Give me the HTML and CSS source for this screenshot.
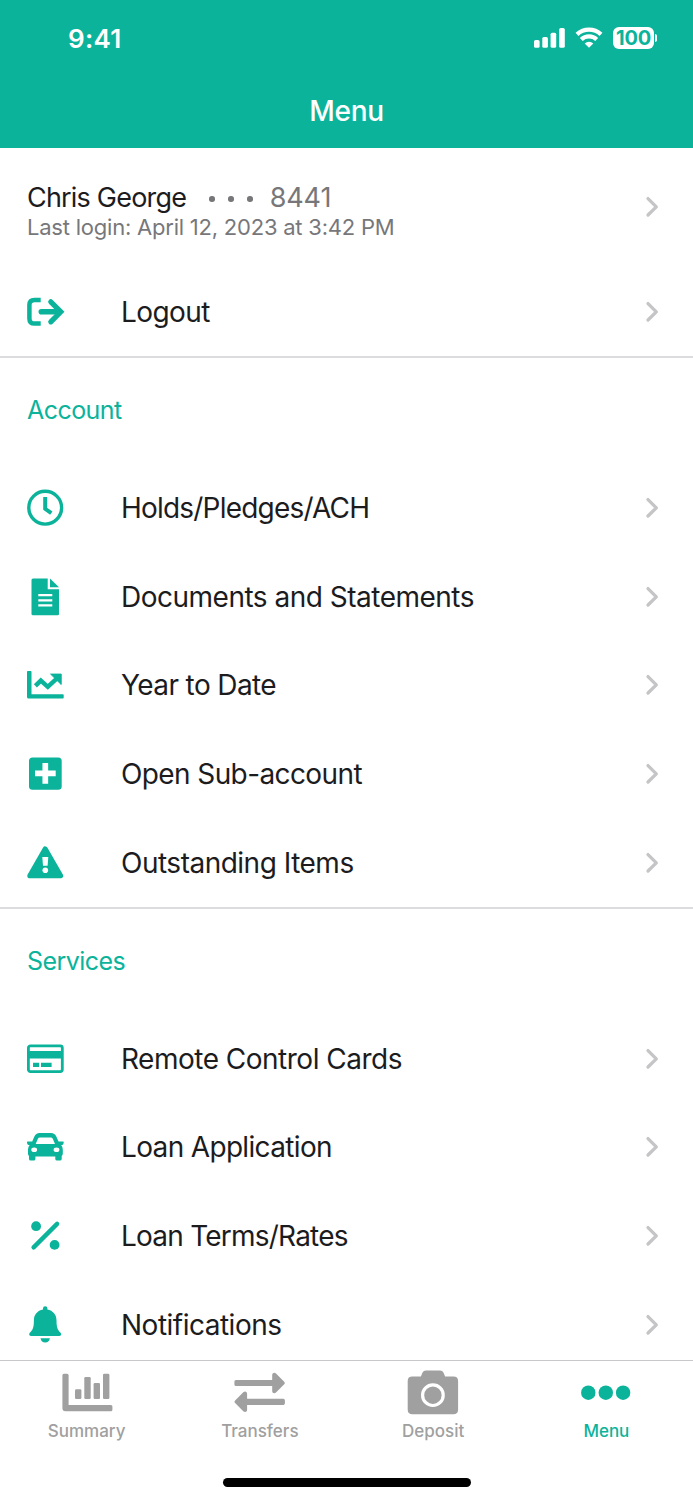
FILE: index.html
```
<!DOCTYPE html>
<html lang="en">

<head>
    <meta charset="UTF-8">
    <meta name="viewport" content="width=device-width, initial-scale=1.0">
    <title>Menu</title>
    <link rel="stylesheet" href="styles.css">
</head>

<body>
    <!-- Shared chevron -->
    <svg class="defs" width="0" height="0">
        <symbol id="chevron" viewBox="0 0 16 24">
            <path d="M4 3.6 L12.3 11.8 L4 20" fill="none" stroke="#c5c5c7" stroke-width="3.3" stroke-linecap="round" stroke-linejoin="round"/>
        </symbol>
    </svg>

    <div class="app">
        <header class="header">
            <div class="status-bar">
                <span class="time">9:41</span>
                <div class="status-icons">
                    <svg width="32" height="22" viewBox="0 0 32 22" fill="#fff">
                        <rect x="0" y="13" width="5.6" height="7.8" rx="1.6"/>
                        <rect x="8.3" y="10" width="5.6" height="10.8" rx="1.6"/>
                        <rect x="16.6" y="5.7" width="5.6" height="15.1" rx="1.6"/>
                        <rect x="25.2" y="1" width="5.6" height="19.8" rx="1.6"/>
                    </svg>
                    <svg class="wifi" width="28" height="22" viewBox="0 0 28 22" fill="none" stroke="#fff" stroke-width="4.2">
                        <path d="M2 7.4 A17.6 17.6 0 0 1 26 7.4"/>
                        <path d="M6.3 12.5 A11.2 11.2 0 0 1 21.7 12.5"/>
                        <path d="M14 20.8 L9.7 16.6 A6.2 6.2 0 0 1 18.3 16.6 Z" fill="#fff" stroke="none"/>
                    </svg>
                    <div class="battery">100</div>
                    <div class="battery-tip"></div>
                </div>
            </div>
            <h1 class="title">Menu</h1>
        </header>

        <main class="content">
            <section class="section">
                <div class="profile">
                    <div class="profile-info">
                        <div class="profile-name">
                            <span class="name">Chris George</span>
                            <span class="mask"><i></i><i></i><i></i></span>
                            <span class="number">8441</span>
                        </div>
                        <p class="last-login">Last login: April 12, 2023 at 3:42 PM</p>
                    </div>
                    <svg class="chevron"><use href="#chevron"/></svg>
                </div>
                <div class="row">
                    <svg class="icon" viewBox="0 0 40 40" fill="none" stroke="#0bb39b">
                        <path d="M15.7 7.9 H9.5 Q4.4 7.9 4.4 13 V26.4 Q4.4 31.5 9.5 31.5 H15.7" stroke-width="4.5"/>
                        <path d="M16.3 19.8 H33" stroke-width="5.6" stroke-linecap="round"/>
                        <path d="M25.8 9.8 L35.8 19.8 L25.8 29.8" stroke-width="5.2" stroke-linecap="round"/>
                    </svg>
                    <span class="label logout">Logout</span>
                    <svg class="chevron"><use href="#chevron"/></svg>
                </div>
            </section>

            <section class="section">
                <h2 class="section-title">Account</h2>
                <div class="row">
                    <svg class="icon" viewBox="0 0 40 40" fill="none" stroke="#0bb39b">
                        <circle cx="20.2" cy="19.7" r="16.4" stroke-width="3.4"/>
                        <path d="M20.2 9 V20.8 L26.3 25.2" stroke-width="4"/>
                    </svg>
                    <span class="label holds">Holds/Pledges/ACH</span>
                    <svg class="chevron"><use href="#chevron"/></svg>
                </div>
                <div class="row">
                    <svg class="icon" viewBox="0 0 40 40" fill="#0bb39b">
                        <path d="M8 1.5 H22.7 V12.3 H34 V37 Q34 38.3 32.7 38.3 H8 Q6.5 38.3 6.5 37 V3 Q6.5 1.5 8 1.5 Z"/>
                        <path d="M25 1.5 L34 10.2 H25 Z"/>
                        <path d="M13.3 18.2 H27.3 M13.3 23.3 H27.3 M13.3 28.3 H27.3" stroke="#fff" stroke-width="2.2"/>
                    </svg>
                    <span class="label documents">Documents and Statements</span>
                    <svg class="chevron"><use href="#chevron"/></svg>
                </div>
                <div class="row">
                    <svg class="icon" viewBox="0 0 40 40" fill="none" stroke="#0bb39b">
                        <path d="M2 6.8 Q2 6 2.8 6 H5.7 Q6.5 6 6.5 6.8 V29.3 H37.9 Q38.7 29.3 38.7 30.1 V32.8 Q38.7 33.6 37.9 33.6 H3.5 Q2 33.6 2 32 Z" fill="#0bb39b" stroke="none"/>
                        <path d="M10.4 20.8 L15.8 15.6 L22.8 21.8 L32.5 12.8" stroke-width="4.4"/>
                        <path d="M25.6 9.1 H36.2 V19.5 Z" fill="#0bb39b" stroke-linejoin="round"/>
                    </svg>
                    <span class="label year">Year to Date</span>
                    <svg class="chevron"><use href="#chevron"/></svg>
                </div>
                <div class="row">
                    <svg class="icon" viewBox="0 0 40 40" fill="#0bb39b">
                        <rect x="4" y="3.5" width="32.7" height="32.3" rx="3.5"/>
                        <path d="M10 19.4 H30.7 M20.3 9.1 V29.7" stroke="#fff" stroke-width="5.7"/>
                    </svg>
                    <span class="label sub-account">Open Sub-account</span>
                    <svg class="chevron"><use href="#chevron"/></svg>
                </div>
                <div class="row">
                    <svg class="icon" viewBox="0 0 40 40" fill="#0bb39b">
                        <path d="M20.2 6 L35.6 32.7 H4.9 Z" stroke="#0bb39b" stroke-width="5.2" stroke-linejoin="round"/>
                        <path d="M17.3 14 H23.3 L22.6 22.7 H18 Z" fill="#fff"/>
                        <circle cx="20.3" cy="27.2" r="2.8" fill="#fff"/>
                    </svg>
                    <span class="label outstanding">Outstanding Items</span>
                    <svg class="chevron"><use href="#chevron"/></svg>
                </div>
            </section>

            <section class="section">
                <h2 class="section-title">Services</h2>
                <div class="row">
                    <svg class="icon" viewBox="0 0 40 40" fill="#0bb39b">
                        <rect x="3.4" y="6.8" width="33.9" height="25.8" rx="2" fill="none" stroke="#0bb39b" stroke-width="2.8"/>
                        <path d="M3 11.9 H38 V19.5 H3 Z M8 23.7 H14.2 V28 H8 Z M16 23.7 H26.6 V28 H16 Z"/>
                    </svg>
                    <span class="label remote">Remote Control Cards</span>
                    <svg class="chevron"><use href="#chevron"/></svg>
                </div>
                <div class="row">
                    <svg class="icon" viewBox="0 0 40 40" fill="#0bb39b">
                        <path fill-rule="evenodd" d="M14.5 6 H26 Q29.8 6 31.3 9.5 L33.5 14.6 H38 Q39 14.6 38.7 15.7 L38.3 17 Q38 18 37 18 H36.2 Q37.8 20 37.8 22.5 V26.5 Q37.8 28 36.7 29 V32 Q36.7 33.6 35 33.6 H32 Q30.3 33.6 30.3 32 V29.5 H10.4 V32 Q10.4 33.6 8.7 33.6 H5.7 Q4 33.6 4 32 V29 Q3 28 3 26.5 V22.5 Q3 20 4.6 18 H3.7 Q2.7 18 2.4 17 L2 15.7 Q1.7 14.6 2.7 14.6 H7.2 L9.4 9.5 Q10.9 6 14.5 6 Z M15 10.4 Q13.5 10.4 12.9 11.8 L10.7 17 H30 L27.8 11.8 Q27.2 10.4 25.7 10.4 Z"/>
                        <ellipse cx="9.2" cy="22.8" rx="2.9" ry="2.3" fill="#fff"/>
                        <ellipse cx="31.5" cy="22.8" rx="2.9" ry="2.3" fill="#fff"/>
                    </svg>
                    <span class="label loan-app">Loan Application</span>
                    <svg class="chevron"><use href="#chevron"/></svg>
                </div>
                <div class="row">
                    <svg class="icon" viewBox="0 0 40 40" fill="#0bb39b">
                        <circle cx="11.1" cy="10.2" r="4.9"/>
                        <circle cx="29.6" cy="28.9" r="4.9"/>
                        <path d="M32.1 7.9 L8.6 31.4" stroke="#0bb39b" stroke-width="4.4" stroke-linecap="round"/>
                    </svg>
                    <span class="label rates">Loan Terms/Rates</span>
                    <svg class="chevron"><use href="#chevron"/></svg>
                </div>
                <div class="row">
                    <svg class="icon" viewBox="0 0 40 40" fill="#0bb39b">
                        <path d="M20.2 1.2 Q22.4 1.2 22.4 3.3 V4.6 C28 5.7 31.5 9.6 31.5 15.5 C31.5 22 32.5 25 35.6 27.8 Q36.6 29 36 30 Q35.5 31 34.2 31 H6.2 Q4.9 31 4.3 30 Q3.8 29 4.8 27.8 C7.9 25 8.9 22 8.9 15.5 C8.9 9.6 12.4 5.7 18 4.6 V3.3 Q18 1.2 20.2 1.2 Z"/>
                        <path d="M15.5 33.2 H24.9 Q24 37.6 20.2 37.6 Q16.4 37.6 15.5 33.2 Z"/>
                    </svg>
                    <span class="label notifications">Notifications</span>
                    <svg class="chevron"><use href="#chevron"/></svg>
                </div>
            </section>
        </main>

        <nav class="tab-bar">
            <div class="tabs">
                <div class="tab">
                    <svg class="tab-icon" viewBox="0 0 60 50" fill="#a0a0a0">
                        <path d="M5.4 9.2 Q5.4 7.7 6.9 7.7 H10.1 Q11.6 7.7 11.6 9.2 V39 H53.9 Q55.4 39 55.4 40.5 V43.8 Q55.4 45.3 53.9 45.3 H8.4 Q5.4 45.3 5.4 42.3 Z"/>
                        <rect x="18" y="23.3" width="6.4" height="9.7" rx="1.3"/>
                        <rect x="27.3" y="11" width="6.4" height="22" rx="1.3"/>
                        <rect x="36.6" y="17" width="6.4" height="16" rx="1.3"/>
                        <rect x="46" y="7.7" width="6.4" height="25.3" rx="1.3"/>
                    </svg>
                    <span class="tab-label">Summary</span>
                </div>
                <div class="tab">
                    <svg class="tab-icon" viewBox="0 0 60 50" fill="#a0a0a0">
                        <path d="M6 14 H42.2 V9 C42.2 7 44.3 5.9 46 7.5 L54.2 15.7 Q55.4 17 54.2 18.3 L46 26.5 C44.3 28.1 42.2 27 42.2 25 V20.1 H6 Q4.4 20.1 4.4 18.5 V15.6 Q4.4 14 6 14 Z"/>
                        <path d="M53.3 32.8 H17.1 V27.8 C17.1 25.8 15 24.7 13.3 26.3 L5.1 34.5 Q3.9 35.8 5.1 37.1 L13.3 45.3 C15 46.9 17.1 45.8 17.1 43.8 V38.9 H53.3 Q54.9 38.9 54.9 37.3 V34.4 Q54.9 32.8 53.3 32.8 Z"/>
                    </svg>
                    <span class="tab-label">Transfers</span>
                </div>
                <div class="tab">
                    <svg class="tab-icon" viewBox="0 0 60 50" fill="#a0a0a0">
                        <path d="M9.4 10.6 H17.9 L19.1 7.5 Q20.2 4.6 23 4.6 H37 Q39.8 4.6 40.9 7.5 L42.1 10.6 H50.4 Q55.1 10.6 55.1 15 V43.5 Q55.1 48.2 50.4 48.2 H9.4 Q4.7 48.2 4.7 43.5 V15 Q4.7 10.6 9.4 10.6 Z"/>
                        <circle cx="29.9" cy="29.2" r="10.3" fill="none" stroke="#fff" stroke-width="3.2"/>
                    </svg>
                    <span class="tab-label">Deposit</span>
                </div>
                <div class="tab active">
                    <svg class="tab-icon" viewBox="0 0 60 50" fill="#0bb39b">
                        <circle cx="12.3" cy="26.7" r="7.2"/>
                        <circle cx="29.8" cy="26.7" r="7.2"/>
                        <circle cx="47.1" cy="26.7" r="7.2"/>
                    </svg>
                    <span class="tab-label">Menu</span>
                </div>
            </div>
            <div class="home-indicator"></div>
        </nav>
    </div>
</body>

</html>
```

FILE: styles.css
```
* {
    box-sizing: border-box;
}

body {
    margin: 0;
    background-color: #fff;
    font-family: Inter, "Liberation Sans", sans-serif;
    color: #1c1c1e;
}

.defs {
    display: block;
}

.app {
    display: flex;
    flex-direction: column;
    width: 693px;
    height: 1500px;
    overflow: hidden;
}

/* Header */
.header {
    height: 148px;
    flex-shrink: 0;
    background-color: #0bb39b;
    color: #fff;
}

.status-bar {
    display: flex;
    justify-content: space-between;
    align-items: center;
    height: 76px;
    padding: 0 36px 0 68px;
}

.time {
    font-size: 26px;
    font-weight: 600;
    letter-spacing: 0.3px;
}

.status-icons {
    display: flex;
    align-items: center;
}

.wifi {
    margin-left: 9px;
}

.battery {
    width: 41px;
    height: 22px;
    margin-left: 10px;
    border-radius: 6px;
    background-color: #fff;
    color: #0bb39b;
    font-size: 20px;
    font-weight: 700;
    letter-spacing: -0.2px;
    line-height: 22px;
    text-align: center;
}

.battery-tip {
    width: 2px;
    height: 8px;
    margin-left: 1px;
    border-radius: 0 3px 3px 0;
    background-color: #fff;
}

.title {
    margin: 0;
    font-size: 28px;
    font-weight: 500;
    letter-spacing: -0.3px;
    line-height: 70px;
    text-align: center;
}

/* Menu list */
.content {
    flex: 1;
    min-height: 0;
    overflow: hidden;
}

.section {
    border-bottom: 2px solid #dcdcde;
}

.profile {
    display: flex;
    justify-content: space-between;
    height: 119.5px;
    padding: 33px 33px 0 27px;
}

.profile .chevron {
    margin-top: 14px;
}

.profile-name {
    display: flex;
    align-items: center;
    height: 33px;
    font-size: 27px;
}

.name {
    letter-spacing: -0.8px;
}

.mask {
    display: flex;
    gap: 13.5px;
    margin: 3px 17px 0 23px;
}

.mask i {
    width: 5.5px;
    height: 5.5px;
    border-radius: 50%;
    background-color: #77777a;
}

.number {
    color: #77777a;
    letter-spacing: -0.1px;
}

.last-login {
    margin: 0;
    color: #77777a;
    font-size: 22px;
    letter-spacing: -0.22px;
    line-height: 26px;
}

.row {
    display: flex;
    align-items: center;
    height: 88.7px;
    padding: 0 33px 0 25px;
}

.icon {
    width: 40px;
    height: 40px;
    margin-right: 56px;
}

.label {
    font-size: 28px;
    letter-spacing: -0.5px;
    line-height: 36px;
    white-space: nowrap;
}

.logout,
.year,
.sub-account {
    letter-spacing: -0.6px;
}

.holds {
    letter-spacing: -0.8px;
}

.loan-app {
    letter-spacing: -0.66px;
}

.rates {
    letter-spacing: -0.78px;
}

.chevron {
    width: 16px;
    height: 24px;
    margin-left: auto;
}

.section-title {
    height: 105.3px;
    margin: 0;
    padding-left: 27px;
    color: #0bb39b;
    font-size: 25px;
    font-weight: 400;
    letter-spacing: -0.55px;
    line-height: 105px;
}

/* Bottom tabs */
.tab-bar {
    height: 140px;
    flex-shrink: 0;
    border-top: 1px solid #c8c8ca;
    background-color: #fff;
}

.tabs {
    display: flex;
    height: 117px;
    padding-top: 5px;
}

.tab {
    display: flex;
    flex: 1;
    flex-direction: column;
    align-items: center;
    color: #a0a0a0;
}

.tab.active {
    color: #0bb39b;
}

.tab-icon {
    width: 60px;
    height: 50px;
}

.tab-label {
    font-size: 17px;
    font-weight: 500;
    line-height: 30px;
}

.home-indicator {
    width: 248px;
    height: 8.5px;
    margin: 0 auto;
    border-radius: 5px;
    background-color: #000;
}
```
